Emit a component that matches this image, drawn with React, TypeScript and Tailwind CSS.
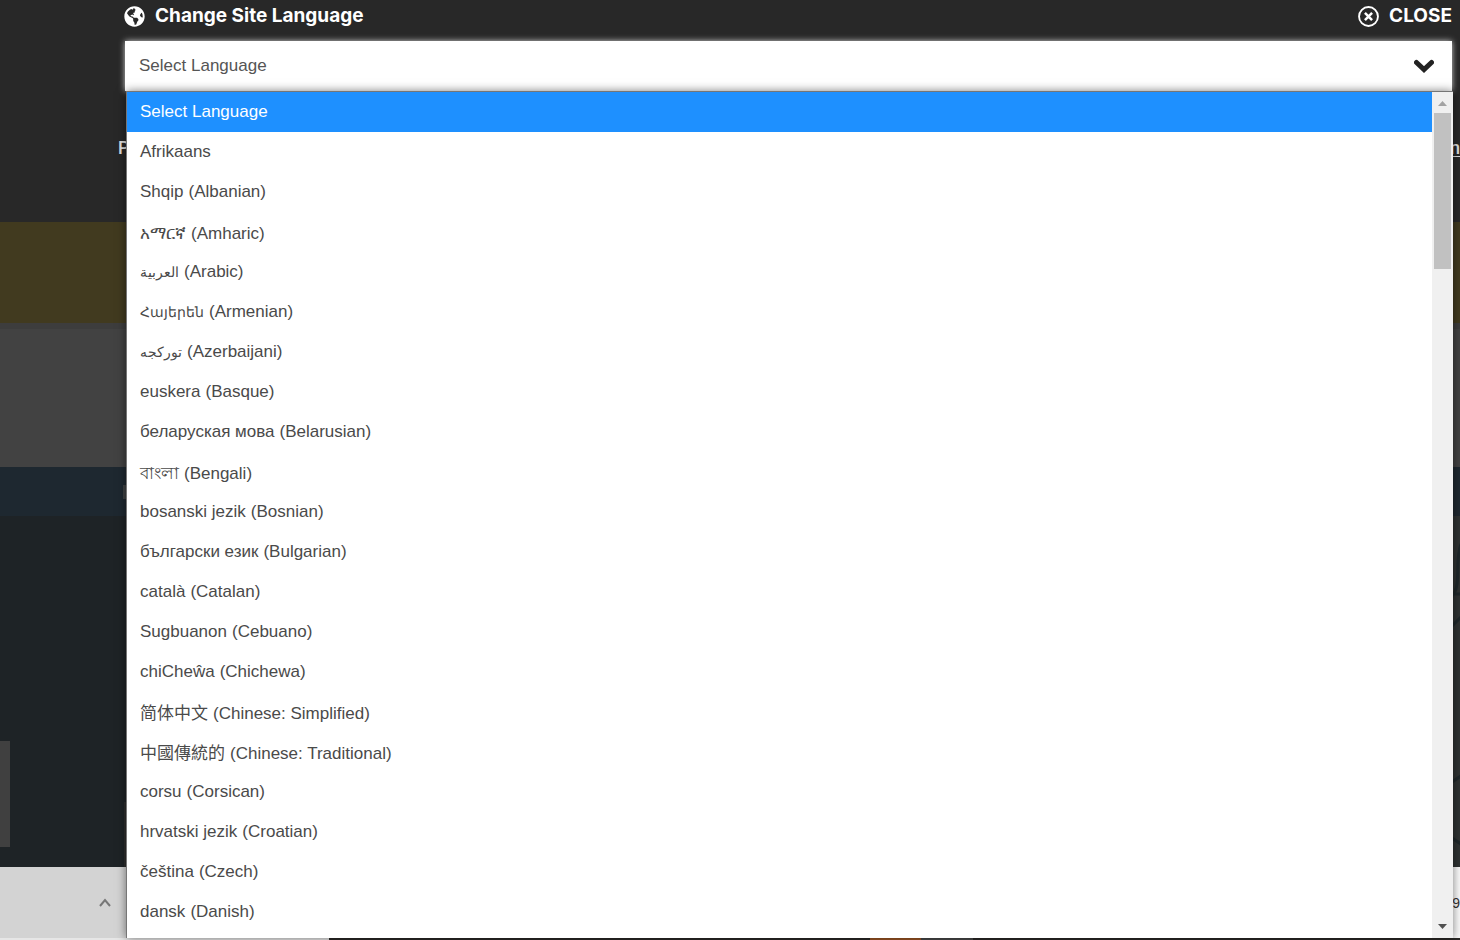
import React, { useState } from 'react';
import { FaGlobeAmericas } from 'react-icons/fa';

type Language = { native: string; english?: string; tall?: boolean; small?: boolean };

// tall: scripts whose glyphs sit lower in the row
// small: scripts whose fallback font runs wide
const languages: Language[] = [
    { native: 'Select Language' },
    { native: 'Afrikaans' },
    { native: 'Shqip', english: 'Albanian' },
    { native: 'አማርኛ', english: 'Amharic', tall: true },
    { native: 'العربية', english: 'Arabic', small: true },
    { native: 'Հայերեն', english: 'Armenian', small: true },
    { native: 'تورکجه', english: 'Azerbaijani', small: true },
    { native: 'euskera', english: 'Basque' },
    { native: 'беларуская мова', english: 'Belarusian' },
    { native: 'বাংলা', english: 'Bengali', tall: true },
    { native: 'bosanski jezik', english: 'Bosnian' },
    { native: 'български език', english: 'Bulgarian' },
    { native: 'català', english: 'Catalan' },
    { native: 'Sugbuanon', english: 'Cebuano' },
    { native: 'chiCheŵa', english: 'Chichewa' },
    { native: '简体中文', english: 'Chinese: Simplified', tall: true },
    { native: '中國傳統的', english: 'Chinese: Traditional', tall: true },
    { native: 'corsu', english: 'Corsican' },
    { native: 'hrvatski jezik', english: 'Croatian' },
    { native: 'čeština', english: 'Czech' },
    { native: 'dansk', english: 'Danish' },
];

const getLabel = ({ native, english }: Language) => (english ? `${native} (${english})` : native);

const PageBackdrop: React.FC = () => (
    <div className="flex min-h-screen flex-col" aria-hidden="true">
        <div className="flex h-[222px] items-start justify-between bg-[#282828] pt-[136px] pl-[118px] font-['Roboto',sans-serif] text-lg leading-6 font-medium text-[#e0e0e0]">
            <span>P</span>
            <span className="underline underline-offset-2">n</span>
        </div>
        <div className="h-[101px] bg-[#413a1f]" />
        <div className="h-[6px] bg-[#3d3d3d]" />
        <div className="h-[138px] bg-[#424242]" />
        <div className="flex h-[49px] items-center bg-[#1e2830] pl-[123px]">
            <div className="h-[14px] w-4 bg-[#3f4143]" />
        </div>
        <div className="flex h-[351px] items-end bg-[#1e2326]">
            <div className="mb-5 h-[106px] w-[10px] bg-[#404040]" />
            <div className="ml-[114px] h-[65px] w-4 bg-[#2d2d2d]" />
            <svg className="ml-auto h-full w-4 bg-[#2e3232]" viewBox="0 0 16 351" fill="none" stroke="#1e272a" strokeWidth="3">
                <path d="M17 28c-5 14-2 26-4 40s-6 8-5 14M8 78h9M8 110l9-9M8 266l9-6M8 322l9 6" />
            </svg>
        </div>
        <div className="flex grow items-center justify-between bg-[#d3d3d3] pl-[99px]">
            <svg className="h-3 w-3" viewBox="0 0 12 12" fill="none" stroke="#777" strokeWidth="2">
                <path d="M1 9l5-6 5 6" />
            </svg>
            <span className="flex items-center self-stretch bg-[#fafafa] text-sm text-[#333]">49</span>
        </div>
        <div className="flex h-[2px] bg-[#2b2927]">
            <div className="w-[329px] bg-[#e6e6e6]" />
            <div className="ml-[541px] w-[51px] bg-[#9c5524]" />
            <div className="w-[52px] bg-[#4a4a4a]" />
        </div>
    </div>
);

const Scrollbar: React.FC = () => (
    <div className="flex w-[21px] shrink-0 flex-col items-center bg-[#f0f0f0]">
        <svg className="h-[21px] w-[9px]" viewBox="0 0 9 21" fill="#a3a3a3">
            <path d="M0 14l4.5-5L9 14z" />
        </svg>
        <div className="h-[156px] w-[17px] bg-[#c1c1c1]" />
        <svg className="mt-auto h-[21px] w-[9px]" viewBox="0 0 9 21" fill="#505050">
            <path d="M0 7l4.5 5L9 7z" />
        </svg>
    </div>
);

const App: React.FC = () => {
    const [selected, setSelected] = useState('Select Language');

    return (
        <div className="relative min-h-screen overflow-hidden font-['Liberation_Sans','Noto_Sans_CJK_SC',sans-serif]">
            <PageBackdrop />

            <div className="absolute inset-x-0 top-0 pr-2 pl-[124px]">
                <div className="flex h-8 items-center justify-between font-['Inter',sans-serif] text-[19px] leading-6 font-bold text-white">
                    <label htmlFor="language" className="flex items-center gap-[10px]">
                        <FaGlobeAmericas className="h-[21px] w-[21px]" />
                        Change Site Language
                    </label>
                    <button type="button" className="flex items-center gap-[10px]">
                        <svg className="h-[21px] w-[21px]" viewBox="0 0 20 20" fill="none" stroke="currentColor">
                            <circle cx="10" cy="10" r="9" strokeWidth="1.8" />
                            <path d="M6.6 6.6l6.8 6.8M13.4 6.6l-6.8 6.8" strokeWidth="2.4" />
                        </svg>
                        CLOSE
                    </button>
                </div>

                <div className="relative mt-[9px] ml-px">
                    <select
                        id="language"
                        value={selected}
                        onChange={(e) => setSelected(e.target.value)}
                        className="h-[50px] w-full appearance-none bg-white px-[14px] text-[17px] text-[#555] shadow-[0_0_6px_#ccc] outline-none"
                    >
                        {languages.map((language) => (
                            <option key={language.native}>{getLabel(language)}</option>
                        ))}
                    </select>
                    <svg
                        className="pointer-events-none absolute top-[18px] right-[18px] h-[14px] w-5"
                        viewBox="0 0 20 14"
                        fill="none"
                        stroke="#222"
                        strokeWidth="5"
                        aria-hidden="true"
                    >
                        <path d="M2.5 3.5l7.5 7 7.5-7" strokeLinecap="round" />
                    </svg>
                </div>

                <div className="relative -mr-px ml-[2px] flex border-t border-l border-[#767676] bg-white shadow-[0_0_9px_rgba(0,0,0,0.5)]">
                    <ul role="listbox" aria-label="Languages" className="grow pb-[6px] text-[17px] text-[#4a4a4a]">
                        {languages.map((language) => {
                            const label = getLabel(language);
                            return (
                                <li
                                    key={label}
                                    role="option"
                                    aria-selected={label === selected}
                                    onClick={() => setSelected(label)}
                                    className={`flex h-10 items-center gap-[5px] overflow-hidden pl-[13px] leading-6 ${language.tall ? 'pt-1' : ''} ${label === selected ? 'bg-[#1e90ff] text-white' : ''}`}
                                >
                                    <span className={language.small ? 'text-sm leading-6' : ''}>{language.native}</span>
                                    {language.english && <span>({language.english})</span>}
                                </li>
                            );
                        })}
                    </ul>
                    <Scrollbar />
                </div>
            </div>
        </div>
    );
};

export default App;
